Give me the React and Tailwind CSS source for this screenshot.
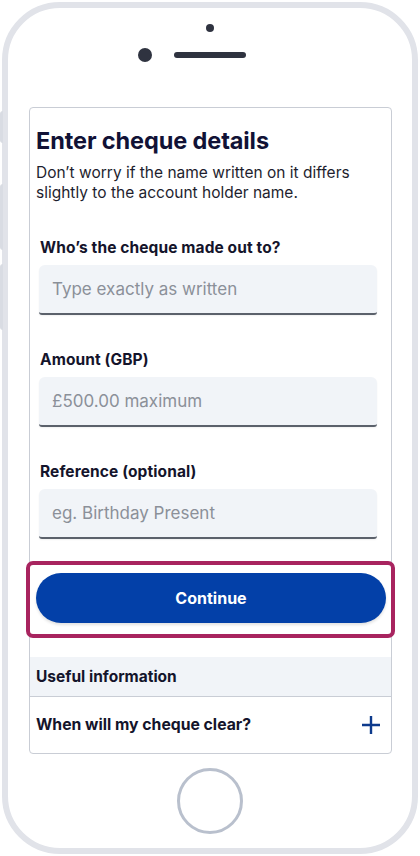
import React from 'react';

const fields = [
  { label: 'Who\u2019s the cheque made out to?', placeholder: 'Type exactly as written' },
  { label: 'Amount (GBP)', placeholder: '\u00a3500.00 maximum' },
  { label: 'Reference (optional)', placeholder: 'eg. Birthday Present' },
];

const Field = ({ label, placeholder, first }) => (
  <div className={`pl-[9px] pr-[14px] ${first ? 'mt-[36px]' : 'mt-[35px]'}`}>
    <label className="block pl-[1px] text-[15.5px] leading-[20px] font-bold text-[#14142b] tracking-[0.1px]">{label}</label>
    <input
      placeholder={placeholder}
      className="mt-[7px] w-full h-[50px] rounded-t-[6px] rounded-b-[3px] bg-[#f1f4f8] border-b-2 border-[#5b616b] px-[13px] text-[17px] text-[#14142b] placeholder:text-[#8b9099] outline-none shadow-[0_1px_2px_rgba(0,0,0,0.06)]"
    />
  </div>
);

const App = () => {
  return (
    <div className="w-[420px] h-[856px] bg-white overflow-hidden pt-[2px] px-[2px]" style={{ fontFamily: 'Inter, "Noto Sans", sans-serif' }}>
      {/* phone body */}
      <div className="relative h-[852px] rounded-[58px] border-[6px] border-[#e1e3e9] bg-white flex flex-col">
        {/* side buttons */}
        <div className="absolute -left-[8px] top-[103px] w-[3px] h-[32px] rounded-l bg-[#d9dce3]" />
        <div className="absolute -left-[8px] top-[176px] w-[3px] h-[66px] rounded-l bg-[#d9dce3]" />
        <div className="absolute -left-[8px] top-[256px] w-[3px] h-[66px] rounded-l bg-[#d9dce3]" />

        {/* earpiece */}
        <div className="h-[99px] flex flex-col items-center pt-[16px]">
          <div className="w-[8px] h-[8px] rounded-full bg-[#2f3340]" />
          <div className="mt-[16px] flex items-center">
            <div className="w-[14px] h-[14px] rounded-full bg-[#2f3340]" />
            <div className="w-[22px]" />
            <div className="w-[72px] h-[6px] rounded-full bg-[#2f3340]" />
            <div className="w-[36px]" />
          </div>
        </div>

        {/* screen */}
        <div className="ml-[21px] mr-[20px] h-[647px] rounded-[4px] border border-[#c9cdd5] bg-white flex flex-col">
          <div className="pt-[19px]">
            <h1 className="px-[6px] text-[23.5px] leading-[28px] font-bold text-[#111236] tracking-[-0.1px]">Enter cheque details</h1>
            <p className="mt-[8px] px-[6px] max-w-[340px] text-[15.5px] leading-[19.5px] text-[#1e1e2e]">
              Don’t worry if the name written on it differs slightly to the account holder name.
            </p>
            {fields.map((f, i) => (
              <Field key={f.label} {...f} first={i === 0} />
            ))}

            {/* continue with focus outline */}
            <div className="mt-[22px] -mx-[4px] rounded-[7px] border-[4px] border-[#a8245f] bg-white pt-[8px] pb-[11px] pl-[6px] pr-[5px]">
              <button className="w-full h-[50px] rounded-full bg-[#0340a8] text-white text-[16px] font-bold shadow-[0_2px_3px_rgba(0,0,0,0.12)]">
                Continue
              </button>
            </div>

            <div className="mt-[19px] h-[40px] flex items-center bg-[#f1f4f8] border-b border-[#c9cdd5] px-[6px]">
              <span className="text-[15.5px] font-bold text-[#14142b]">Useful information</span>
            </div>
            <div className="h-[55px] flex items-center justify-between px-[6px]">
              <span className="text-[15.75px] font-bold text-[#14142b]">When will my cheque clear?</span>
              <svg width="20" height="20" viewBox="0 0 20 20" className="mr-[4px]">
                <path d="M10 1v18M1 10h18" stroke="#0d3a8c" strokeWidth="2.4" />
              </svg>
            </div>
          </div>
        </div>

        {/* home button */}
        <div className="flex-1 flex items-center justify-center">
          <div className="w-[66px] h-[66px] rounded-full border-[3px] border-[#b9c0cd]" />
        </div>
      </div>
    </div>
  );
};

export default App;
